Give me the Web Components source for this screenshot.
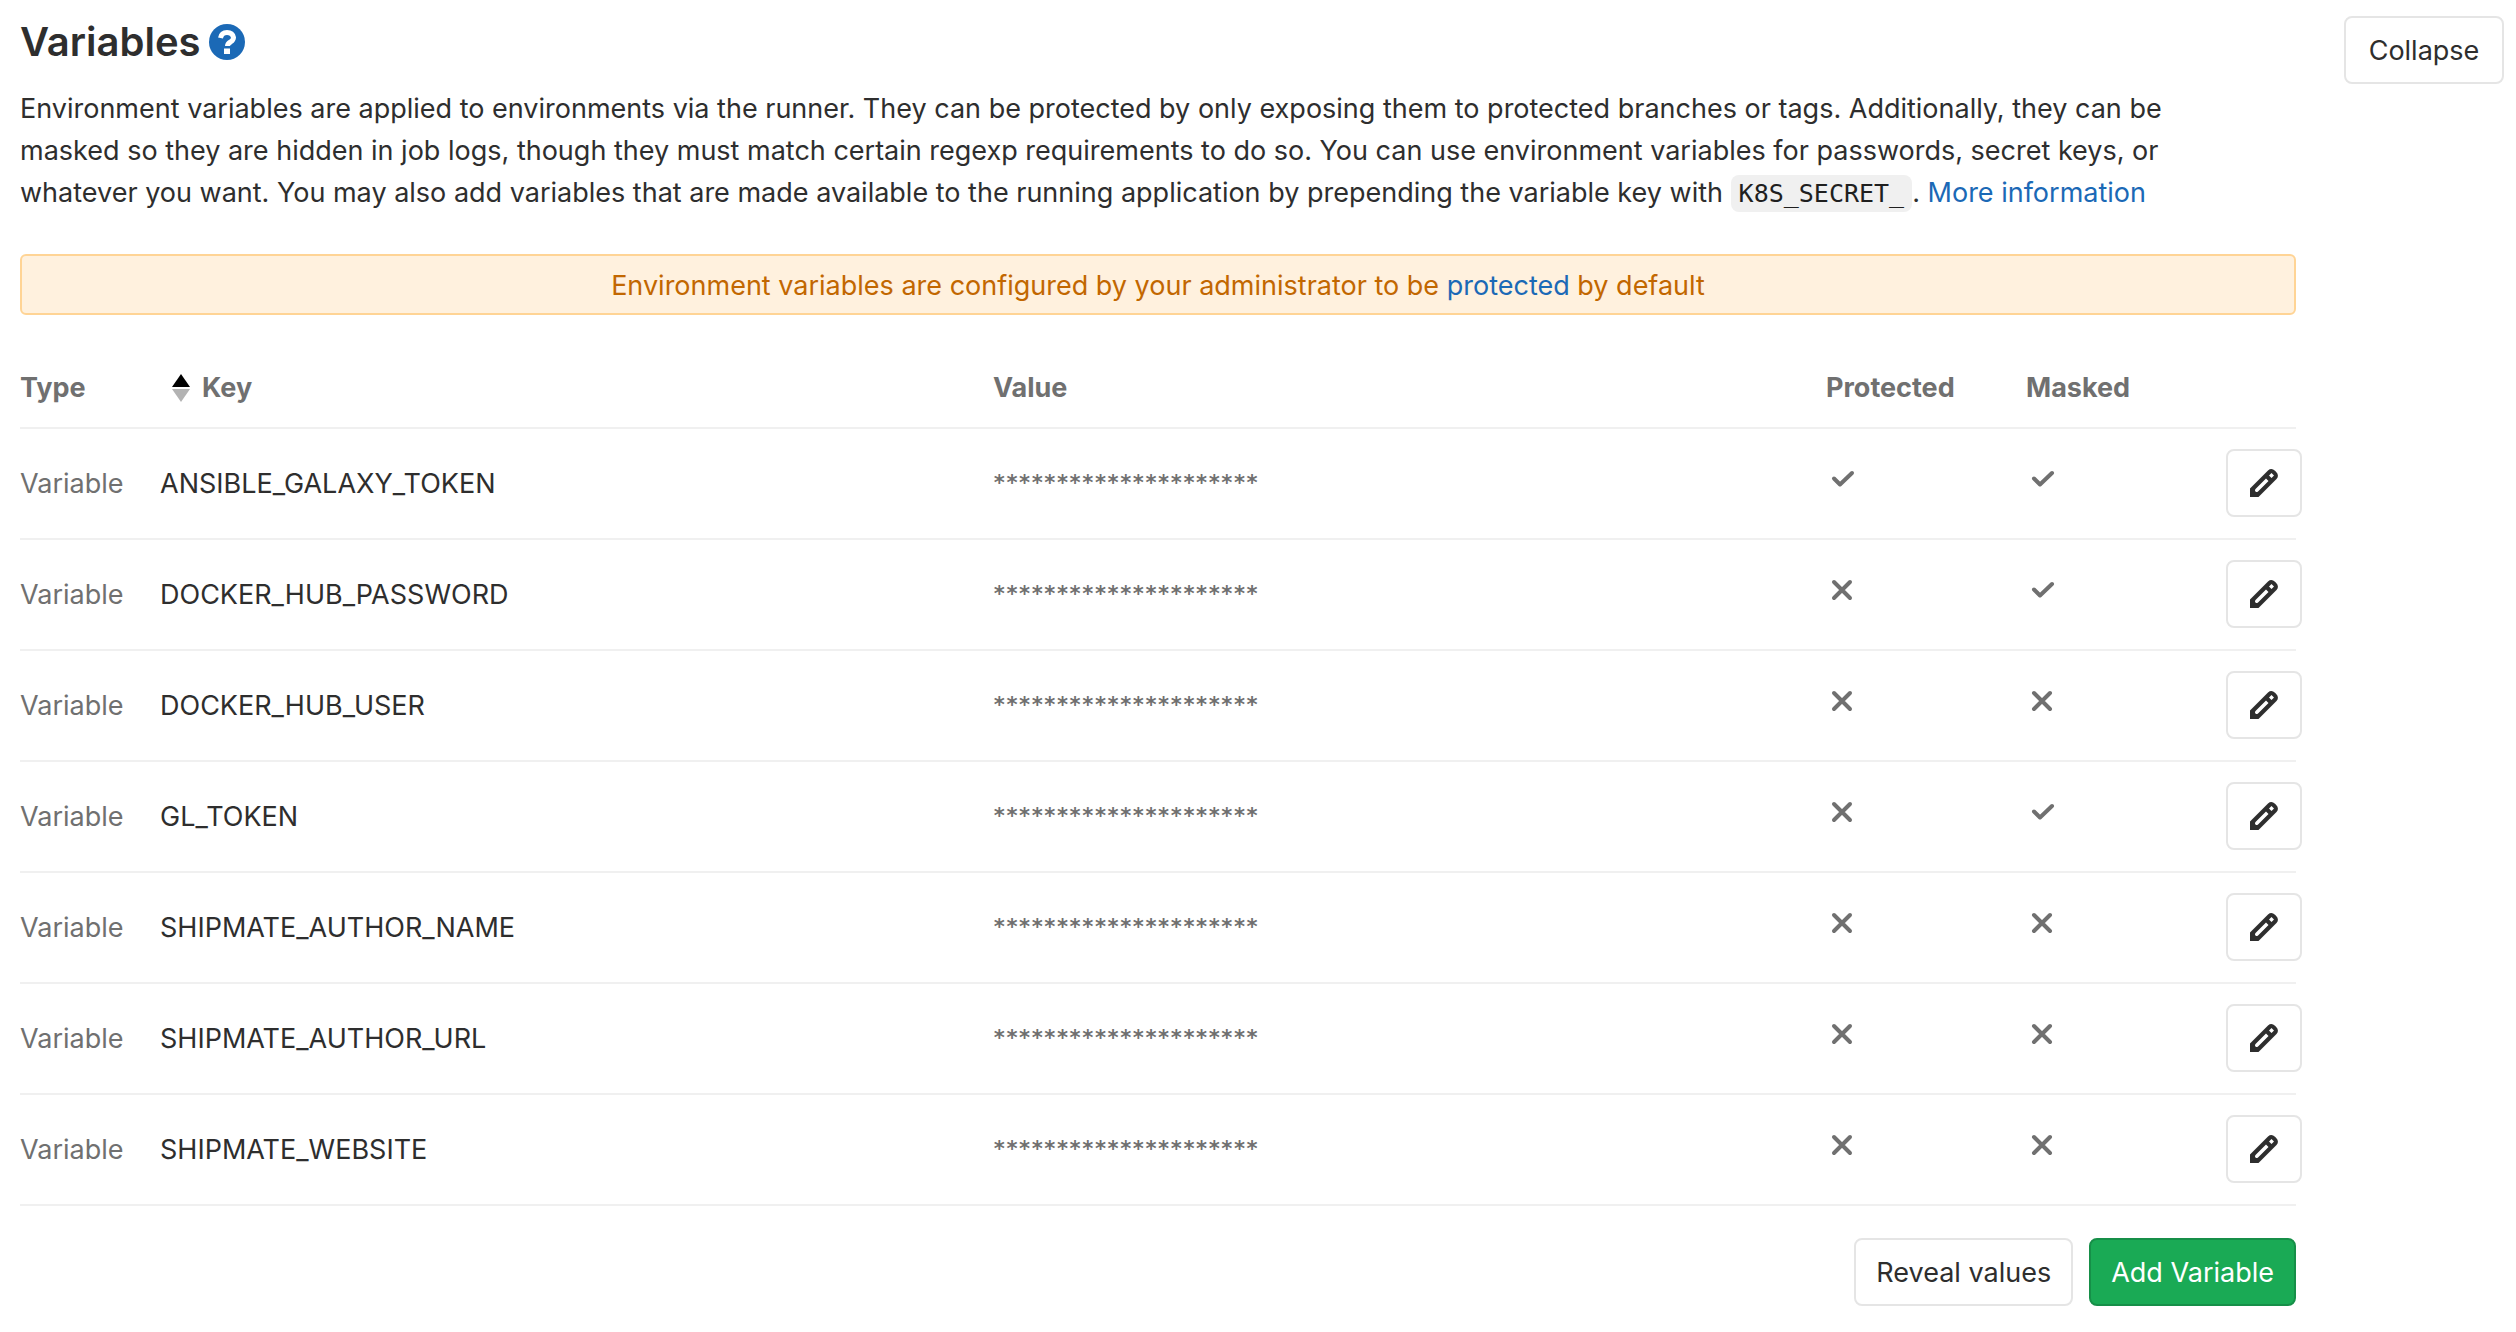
<!DOCTYPE html>
<html lang="en">
<head>
<meta charset="utf-8">
<title>Variables</title>
<style>
  :root {
    --text: #2e2e2e;
    --muted: #707070;
    --link: #1b69b6;
    --border: #e5e5e5;
    --rule: #f0f0f0;
    --mono: "DejaVu Sans Mono", "Liberation Mono", monospace;
  }
  body {
    margin: 0;
    background: #fff;
    color: var(--text);
    font: 27px/42px Inter, "Liberation Sans", sans-serif;
  }
  a { color: var(--link); text-decoration: none; }
  code {
    padding: 4px 8px;
    border-radius: 8px;
    background: #f0f0f0;
    color: #1f1f1f;
    font: 25px/30px var(--mono);
  }
</style>
</head>
<body>
<settings-section>
  <span slot="title">Variables</span>
  <ui-button slot="toggle">Collapse</ui-button>
  <span slot="description">Environment variables are applied to environments via the runner. They can be protected by only exposing them to protected branches or tags. Additionally, they can be masked so they are hidden in job logs, though they must match certain regexp requirements to do so. You can use environment variables for passwords, secret keys, or whatever you want. You may also add variables that are made available to the running application by prepending the variable key with <code>K8S_SECRET_</code>. <a href="#more">More information</a></span>
  <alert-banner>Environment variables are configured by your administrator to be <a href="#protected">protected</a> by default</alert-banner>
  <variables-table></variables-table>
  <action-bar>
    <ui-button>Reveal values</ui-button>
    <ui-button variant="success">Add Variable</ui-button>
  </action-bar>
</settings-section>

<script>
const icons = {
  check: '<svg viewBox="0 0 32 32" width="32" height="32" role="img" aria-label="Yes"><path d="M8 15.5l6 6L26 10" fill="none" stroke="currentColor" stroke-width="4" stroke-linecap="round" stroke-linejoin="round"/></svg>',
  close: '<svg viewBox="0 0 32 32" width="32" height="32" role="img" aria-label="No"><path d="M8 8l16 16M24 8L8 24" fill="none" stroke="currentColor" stroke-width="4" stroke-linecap="round"/></svg>',
  pencil: '<svg viewBox="0 0 28 28" width="28" height="28" aria-hidden="true"><path fill="currentColor" fill-rule="evenodd" d="M0 28v-8.500L18 1.500Q21.500-1.500 25 1.800L26.200 3Q29.500 6.500 26.500 10L8.500 28ZM21.500 4L19 6.500 21.500 9 24 6.500ZM16 9.500L5.500 20Q4.500 21.500 5.500 22.500T8 22.500L18.500 12Z"/></svg>',
  sort: '<svg viewBox="0 0 18 28" width="18" height="28" aria-hidden="true"><path d="M9 0l9 13H0z" fill="#000"/><path d="M0 15h18L9 28z" fill="#b3b3b3"/></svg>',
  help: '<svg viewBox="0 0 36 36" width="36" height="36" aria-hidden="true"><circle cx="18" cy="18" r="18" fill="currentColor"/><path d="M11.500 14Q12.500 8.500 18 8.500T24.500 13.500Q24.500 16 21.500 18Q18.500 19.800 18.500 22" fill="none" stroke="#fff" stroke-width="5"/><path d="M15 24.500h6v5.500h-6z" fill="#fff"/></svg>'
};

class BaseElement extends HTMLElement {
  constructor() {
    super();
    this.attachShadow({ mode: 'open' }).innerHTML = this.template();
  }
}

customElements.define('ui-button', class extends BaseElement {
  template() {
    return `<style>
      :host { display: inline-block; }
      button {
        display: flex; align-items: center; justify-content: center;
        width: 100%; min-height: 68px; padding: 2px 20px 0;
        border: 2px solid var(--border); border-radius: 8px;
        background: #fff; color: var(--text); font: inherit; white-space: nowrap; cursor: pointer;
      }
      :host([variant="success"]) button { background: #1aaa55; border-color: #168f48; color: #fff; }
      :host([variant="icon"]) button { padding: 0; }
    </style><button type="button"><slot></slot></button>`;
  }
});

customElements.define('alert-banner', class extends BaseElement {
  template() {
    return `<style>
      :host {
        display: block; padding: 9px 16px 7px; border: 2px solid #ffd495; border-radius: 6px;
        background: #fff1de; color: #c26700; text-align: center; line-height: 41px;
      }
    </style><slot></slot>`;
  }
});

customElements.define('action-bar', class extends BaseElement {
  template() {
    return `<style>
      :host { display: flex; justify-content: flex-end; gap: 16px; margin-top: 32px; }
    </style><slot></slot>`;
  }
});

customElements.define('settings-section', class extends BaseElement {
  template() {
    return `<style>
      :host {
        display: grid; grid-template-columns: minmax(0, 1fr) auto; column-gap: 48px;
        align-items: start; padding: 16px 12px 24px 20px;
      }
      .body { display: block; }
      h4 { display: flex; align-items: center; gap: 8px; margin: 0 0 20px; font-size: 40px; line-height: 52px; font-weight: 600; }
      h4 a { display: flex; color: var(--link); }
      p { margin: 0 88px 40px 0; }
      slot[name="toggle"]::slotted(*) { min-width: 160px; }
    </style>
    <div class="body">
      <h4><slot name="title"></slot><a href="#help" aria-label="Help">${icons.help}</a></h4>
      <p><slot name="description"></slot></p>
      <slot></slot>
    </div>
    <slot name="toggle"></slot>`;
  }
});

customElements.define('variables-table', class extends BaseElement {
  template() {
    const rows = [
      ['ANSIBLE_GALAXY_TOKEN', true, true],
      ['DOCKER_HUB_PASSWORD', false, true],
      ['DOCKER_HUB_USER', false, false],
      ['GL_TOKEN', false, true],
      ['SHIPMATE_AUTHOR_NAME', false, false],
      ['SHIPMATE_AUTHOR_URL', false, false],
      ['SHIPMATE_WEBSITE', false, false]
    ];
    const flag = on => `<td class="flag">${on ? icons.check : icons.close}</td>`;
    return `<style>
      :host { display: block; margin-top: 32px; }
      table { width: 100%; table-layout: fixed; border-collapse: separate; border-spacing: 0; }
      th, td { box-sizing: border-box; padding: 0; text-align: left; vertical-align: middle; border-bottom: 2px solid var(--rule); }
      th { height: 82px; padding-top: 2px; color: var(--muted); font-weight: 700; }
      td { height: 111px; color: var(--muted); }
      td.key { color: var(--text); }
      td.flag { padding-bottom: 10px; }
      td.value { padding-bottom: 2px; font: bold 21px/32px var(--mono); }
      td.edit { padding-bottom: 2px; }
      .sort { display: flex; align-items: center; gap: 12px; padding-left: 12px; }
      svg { display: block; }
      col.type { width: 140px; } col.flags { width: 200px; } col.actions { width: 70px; }
      ui-button { display: block; width: 76px; }
    </style>
    <table>
      <colgroup><col class="type"><col><col><col class="flags"><col class="flags"><col class="actions"></colgroup>
      <thead><tr>
        <th>Type</th>
        <th><span class="sort">${icons.sort}Key</span></th>
        <th>Value</th><th>Protected</th><th>Masked</th><th></th>
      </tr></thead>
      <tbody>${rows.map(([key, prot, mask]) => `<tr>
        <td>Variable</td><td class="key">${key}</td><td class="value">${'*'.repeat(21)}</td>
        ${flag(prot)}${flag(mask)}
        <td class="edit"><ui-button variant="icon" title="Edit">${icons.pencil}</ui-button></td>
      </tr>`).join('')}</tbody>
    </table>`;
  }
});
</script>
</body>
</html>
